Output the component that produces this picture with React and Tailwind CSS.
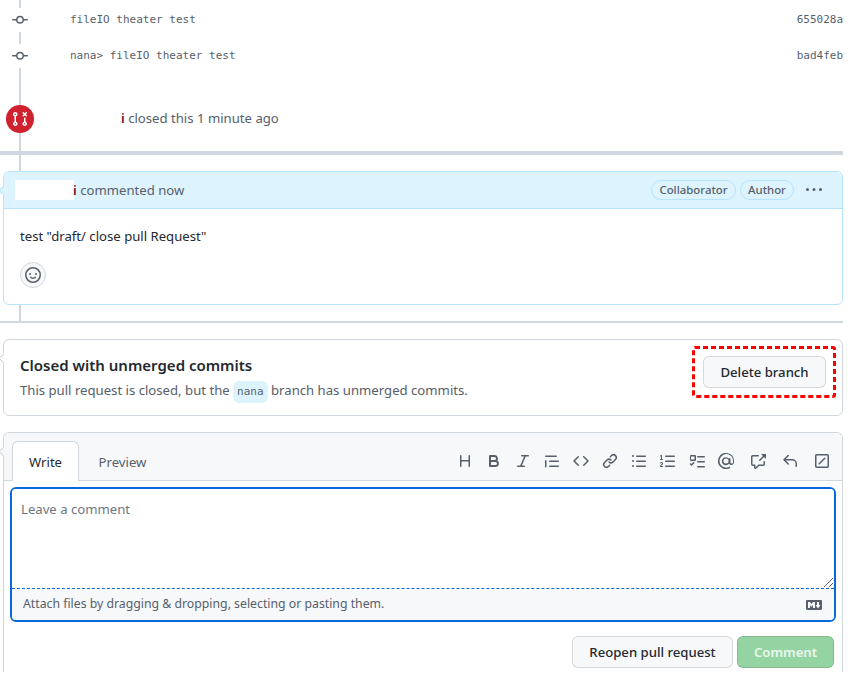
const I = {
  commit: "M11.93 8.5a4.002 4.002 0 0 1-7.86 0H.75a.75.75 0 0 1 0-1.5h3.32a4.002 4.002 0 0 1 7.86 0h3.32a.75.75 0 0 1 0 1.5Zm-1.43-.75a2.5 2.5 0 1 0-5 0 2.5 2.5 0 0 0 5 0Z",
  prClosed: "M3.25 1A2.25 2.25 0 0 1 4 5.372v5.256a2.251 2.251 0 1 1-1.5 0V5.372A2.251 2.251 0 0 1 3.25 1Zm9.5 5.5a.75.75 0 0 1 .75.75v3.378a2.251 2.251 0 1 1-1.5 0V7.25a.75.75 0 0 1 .75-.75Zm-2.03-5.273a.75.75 0 0 1 1.06 0l.97.97.97-.97a.748.748 0 0 1 1.265.332.75.75 0 0 1-.205.729l-.97.97.97.97a.751.751 0 0 1-.018 1.042.751.751 0 0 1-1.042.018l-.97-.97-.97.97a.749.749 0 0 1-1.275-.326.749.749 0 0 1 .215-.734l.97-.97-.97-.97a.75.75 0 0 1 0-1.06ZM2.5 3.25a.75.75 0 1 0 1.5 0 .75.75 0 0 0-1.5 0ZM3.25 12a.75.75 0 1 0 0 1.5.75.75 0 0 0 0-1.5Zm9.5 0a.75.75 0 1 0 0 1.5.75.75 0 0 0 0-1.5Z",
  smiley: "M8 0a8 8 0 1 1 0 16A8 8 0 0 1 8 0ZM1.5 8a6.5 6.5 0 1 0 13 0 6.5 6.5 0 0 0-13 0Zm3.82 1.636a.75.75 0 0 1 1.038.175l.007.009c.103.118.22.222.35.31.264.178.683.37 1.285.37.602 0 1.02-.192 1.285-.371.13-.088.247-.192.35-.31l.007-.008a.75.75 0 0 1 1.222.87l-.022-.015c.02.013.021.015.021.015v.001l-.001.002-.002.003-.005.007-.014.019a2.066 2.066 0 0 1-.184.213c-.16.166-.338.316-.53.445-.63.418-1.37.638-2.127.629-.946 0-1.652-.308-2.126-.63a3.331 3.331 0 0 1-.715-.657l-.014-.02-.005-.006-.002-.003v-.002h-.001l.613-.432-.614.43a.75.75 0 0 1 .183-1.044ZM12 7a1 1 0 1 1-2 0 1 1 0 0 1 2 0ZM5 8a1 1 0 1 1 0-2 1 1 0 0 1 0 2Z",
  kebab: "M8 9a1.5 1.5 0 1 0 0-3 1.5 1.5 0 0 0 0 3ZM1.5 9a1.5 1.5 0 1 0 0-3 1.5 1.5 0 0 0 0 3Zm13 0a1.5 1.5 0 1 0 0-3 1.5 1.5 0 0 0 0 3Z",
  heading: "M3.75 2a.75.75 0 0 1 .75.75V7h7V2.75a.75.75 0 0 1 1.5 0v10.5a.75.75 0 0 1-1.5 0V8.5h-7v4.75a.75.75 0 0 1-1.5 0V2.75A.75.75 0 0 1 3.75 2Z",
  bold: "M4 2h4.5a3.501 3.501 0 0 1 2.852 5.53A3.499 3.499 0 0 1 9.5 14H4a1 1 0 0 1-1-1V3a1 1 0 0 1 1-1Zm1 7v3h4.5a1.5 1.5 0 0 0 0-3Zm3.5-2a1.5 1.5 0 0 0 0-3H5v3Z",
  italic: "M6 2.75A.75.75 0 0 1 6.75 2h6.5a.75.75 0 0 1 0 1.5h-2.505l-3.858 9H9.25a.75.75 0 0 1 0 1.5h-6.5a.75.75 0 0 1 0-1.5h2.505l3.858-9H6.75A.75.75 0 0 1 6 2.75Z",
  quote: "M1.75 2.5h10.5a.75.75 0 0 1 0 1.5H1.75a.75.75 0 0 1 0-1.5Zm4 5h8.5a.75.75 0 0 1 0 1.5h-8.5a.75.75 0 0 1 0-1.5Zm0 5h8.5a.75.75 0 0 1 0 1.5h-8.5a.75.75 0 0 1 0-1.5ZM2.5 7.75v6a.75.75 0 0 1-1.5 0v-6a.75.75 0 0 1 1.5 0Z",
  code: "m11.28 3.22 4.25 4.25a.75.75 0 0 1 0 1.06l-4.25 4.25a.749.749 0 0 1-1.275-.326.749.749 0 0 1 .215-.734L13.94 8l-3.72-3.72a.749.749 0 0 1 .326-1.275.749.749 0 0 1 .734.215Zm-6.56 0a.751.751 0 0 1 1.042.018.751.751 0 0 1 .018 1.042L2.06 8l3.72 3.72a.749.749 0 0 1-.326 1.275.749.749 0 0 1-.734-.215L.47 8.53a.75.75 0 0 1 0-1.06Z",
  link: "m7.775 3.275 1.25-1.25a3.5 3.5 0 1 1 4.95 4.95l-2.5 2.5a3.5 3.5 0 0 1-4.95 0 .751.751 0 0 1 .018-1.042.751.751 0 0 1 1.042-.018 1.998 1.998 0 0 0 2.83 0l2.5-2.5a2.002 2.002 0 0 0-2.83-2.83l-1.25 1.25a.751.751 0 0 1-1.042-.018.751.751 0 0 1-.018-1.042Zm-4.69 9.64a1.998 1.998 0 0 0 2.83 0l1.25-1.25a.751.751 0 0 1 1.042.018.751.751 0 0 1 .018 1.042l-1.25 1.25a3.5 3.5 0 1 1-4.95-4.95l2.5-2.5a3.5 3.5 0 0 1 4.95 0 .751.751 0 0 1-.018 1.042.751.751 0 0 1-1.042.018 1.998 1.998 0 0 0-2.83 0l-2.5 2.5a1.998 1.998 0 0 0 0 2.83Z",
  ul: "M5.75 2.5h8.5a.75.75 0 0 1 0 1.5h-8.5a.75.75 0 0 1 0-1.5Zm0 5h8.5a.75.75 0 0 1 0 1.5h-8.5a.75.75 0 0 1 0-1.5Zm0 5h8.5a.75.75 0 0 1 0 1.5h-8.5a.75.75 0 0 1 0-1.5ZM2 14a1 1 0 1 1 0-2 1 1 0 0 1 0 2Zm1-6a1 1 0 1 1-2 0 1 1 0 0 1 2 0ZM2 4a1 1 0 1 1 0-2 1 1 0 0 1 0 2Z",
  ol: "M5 3.25a.75.75 0 0 1 .75-.75h8.5a.75.75 0 0 1 0 1.5h-8.5A.75.75 0 0 1 5 3.25Zm0 5a.75.75 0 0 1 .75-.75h8.5a.75.75 0 0 1 0 1.5h-8.5A.75.75 0 0 1 5 8.25Zm0 5a.75.75 0 0 1 .75-.75h8.5a.75.75 0 0 1 0 1.5h-8.5a.75.75 0 0 1-.75-.75ZM.924 10.32a.5.5 0 0 1-.851-.525l.001-.001.001-.002.002-.004.007-.011c.097-.144.215-.273.348-.384.228-.19.588-.392 1.068-.392.468 0 .858.181 1.126.484.259.294.377.673.377 1.038 0 .987-.686 1.495-1.156 1.845l-.047.035c-.303.225-.522.4-.654.597h1.357a.5.5 0 0 1 0 1H.5a.5.5 0 0 1-.5-.5c0-1.005.692-1.52 1.167-1.875l.035-.025c.531-.396.8-.625.8-1.078a.57.57 0 0 0-.128-.376C1.806 10.068 1.695 10 1.5 10a.658.658 0 0 0-.429.163.835.835 0 0 0-.144.153ZM2.003 2.5V6h.503a.5.5 0 0 1 0 1H.5a.5.5 0 0 1 0-1h.503V3.308l-.28.14a.5.5 0 0 1-.446-.895l1.003-.5a.5.5 0 0 1 .723.447Z",
  task: "M2 2h4a1 1 0 0 1 1 1v4a1 1 0 0 1-1 1H2a1 1 0 0 1-1-1V3a1 1 0 0 1 1-1Zm0 1.5v3h3.5v-3ZM8.75 3h6.5a.75.75 0 0 1 0 1.5h-6.5a.75.75 0 0 1 0-1.5Zm0 5h6.5a.75.75 0 0 1 0 1.5h-6.5a.75.75 0 0 1 0-1.5Zm0 5h6.5a.75.75 0 0 1 0 1.5h-6.5a.75.75 0 0 1 0-1.5ZM5.28 10.28l-2.25 2.25a.75.75 0 0 1-1.06 0l-1-1a.75.75 0 1 1 1.06-1.06l.47.47 1.72-1.72a.75.75 0 1 1 1.06 1.06Z",
  mention: "M4.75 2.37a6.501 6.501 0 0 0 6.5 11.26.75.75 0 0 1 .75 1.298A7.999 7.999 0 0 1 .989 4.148 8 8 0 0 1 16 7.75v1.5a2.75 2.75 0 0 1-5.072 1.475 3.999 3.999 0 1 1 .047-4.9A.75.75 0 0 1 12.5 5.75v3.5a1.25 1.25 0 0 0 2.5 0v-1.5a6.5 6.5 0 0 0-10.25-5.38ZM10.5 8a2.5 2.5 0 1 0-5 0 2.5 2.5 0 0 0 5 0Z",
  xref: "M2.75 3.5a.25.25 0 0 0-.25.25v7.5c0 .138.112.25.25.25h2a.75.75 0 0 1 .75.75v2.19l2.72-2.72a.749.749 0 0 1 .53-.22h4.5a.25.25 0 0 0 .25-.25v-2.5a.75.75 0 0 1 1.5 0v2.5A1.75 1.75 0 0 1 13.25 13H9.06l-2.573 2.573A1.458 1.458 0 0 1 4 14.543V13H2.75A1.75 1.75 0 0 1 1 11.25v-7.5C1 2.784 1.784 2 2.75 2h5.5a.75.75 0 0 1 0 1.5ZM16 1.25v4.146a.25.25 0 0 1-.427.177L14.03 4.03l-3.75 3.75a.749.749 0 0 1-1.275-.326.749.749 0 0 1 .215-.734l3.75-3.75-1.543-1.543A.25.25 0 0 1 11.604 1h4.146a.25.25 0 0 1 .25.25Z",
  reply: "M6.78 1.97a.75.75 0 0 1 0 1.06L3.81 6h6.44A4.75 4.75 0 0 1 15 10.75v2.5a.75.75 0 0 1-1.5 0v-2.5a3.25 3.25 0 0 0-3.25-3.25H3.81l2.97 2.97a.749.749 0 0 1-.326 1.275.749.749 0 0 1-.734-.215L1.47 7.28a.75.75 0 0 1 0-1.06l4.25-4.25a.75.75 0 0 1 1.06 0Z",
  slash: "M13.25 1c.966 0 1.75.784 1.75 1.75v10.5A1.75 1.75 0 0 1 13.25 15H2.75A1.75 1.75 0 0 1 1 13.25V2.75C1 1.784 1.784 1 2.75 1ZM2.75 2.5a.25.25 0 0 0-.25.25v10.5c0 .138.112.25.25.25h10.5a.25.25 0 0 0 .25-.25V2.75a.25.25 0 0 0-.25-.25Zm8.53 3.28-5.5 5.5a.749.749 0 0 1-1.275-.326.749.749 0 0 1 .215-.734l5.5-5.5a.749.749 0 0 1 1.06 1.06Z",
  md: "M14.85 3c.63 0 1.15.52 1.14 1.15v7.7c0 .63-.51 1.15-1.15 1.15H1.15C.52 13 0 12.48 0 11.84V4.15C0 3.52.52 3 1.15 3ZM9 11V5H7L5.5 7 4 5H2v6h2V8l1.5 1.92L7 8v3Zm2.99.5L14.5 8H13V5h-2v3H9.5Z",
};

function Icon({ d, className = "" }) {
  return (
    <svg viewBox="0 0 16 16" width="16" height="16" fill="currentColor" className={"shrink-0 " + className}>
      <path d={d} />
    </svg>
  );
}

function Commit({ msg, sha }) {
  return (
    <div className="flex h-[36px] items-center">
      <span className="-ml-[9px] bg-white py-[4px] text-[#57606a]">
        <Icon d={I.commit} />
      </span>
      <span className="ml-[42px] font-['DejaVu_Sans_Mono',monospace] text-[11px] text-[#57606a]">{msg}</span>
      <span className="ml-auto font-['DejaVu_Sans_Mono',monospace] text-[11px] text-[#57606a]">{sha}</span>
    </div>
  );
}

function Caret({ border, fill, top }) {
  return <span className={`absolute -left-[4px] size-[7px] rotate-45 border-b border-l ${border} ${fill} ${top}`} />;
}

function Pill({ width, children }) {
  return (
    <span className={`flex h-[20px] items-center justify-center rounded-full border border-[#b6e3ff] text-[11.4px] font-medium text-[#57606a] ${width}`}>
      {children}
    </span>
  );
}

export default function App() {
  return (
    <div className="h-[673px] w-[866px] overflow-hidden bg-white font-['Noto_Sans',sans-serif] text-[13.15px] text-[#24292f]">
      <div className="w-[843px]">
        <div className="ml-[19px] border-l-2 border-[#d0d7de] pt-[2px]">
          <Commit msg="fileIO theater test" sha="655028a" />
          <Commit msg="nana> fileIO theater test" sha="bad4feb" />
          <div className="flex items-center pt-[31px] pb-[18px]">
            <span className="-ml-[15px] flex size-[28px] items-center justify-center rounded-full bg-[#cf222e] text-white">
              <Icon d={I.prClosed} />
            </span>
            <span className="mb-[2px] ml-[87px] leading-[20px] text-[#57606a]">
              <b className="font-semibold text-[#82071e]">i</b> closed this 1 minute ago
            </span>
          </div>
        </div>
        <div className="h-[4px] bg-[#d0d7de]" />

        <div className="ml-[19px] h-[16px] border-l-2 border-[#d0d7de]" />
        <div className="relative ml-[3px] h-[134px] rounded-md border border-[#b6e3ff] bg-white">
          <Caret border="border-[#b6e3ff]" fill="bg-[#ddf4ff]" top="top-[15px]" />
          <div className="relative flex h-[37px] items-center rounded-t-md border-b border-[#b6e3ff] bg-[#ddf4ff] pr-[20px] pl-[11px]">
            <span className="h-[20px] w-[59px] bg-white" />
            <span className="ml-[-1px] pt-[2px] text-[#57606a]">
              <b className="font-semibold text-[#82071e]">i</b> commented now
            </span>
            <div className="ml-auto flex items-center gap-[4px]">
              <Pill width="w-[85px]">Collaborator</Pill>
              <Pill width="w-[54px]">Author</Pill>
              <span className="ml-[8px] text-[#57606a]">
                <Icon d={I.kebab} />
              </span>
            </div>
          </div>
          <p className="pt-[17px] pl-[16px] leading-[20px]">test "draft/ close pull Request"</p>
          <span className="mt-[16px] ml-[16px] flex size-[26px] items-center justify-center rounded-full border border-[#d0d7de] bg-[#f6f8fa] text-[#57606a]">
            <Icon d={I.smiley} />
          </span>
        </div>
        <div className="ml-[19px] h-[16px] border-l-2 border-[#d0d7de]" />
        <div className="h-[2px] bg-[#d0d7de]" />

        <div className="relative mt-[16px] ml-[3px] flex h-[77px] items-center rounded-md border border-[#d0d7de] bg-white pr-[16px] pl-[16px]">
          <Caret border="border-[#d0d7de]" fill="bg-white" top="top-[15px]" />
          <div className="pt-[2px]">
            <h3 className="text-[15px] leading-[22px] font-semibold">Closed with unmerged commits</h3>
            <p className="mt-[4px] leading-[20px] text-[#57606a]">
              This pull request is closed, but the{" "}
              <code className="inline-block rounded-md bg-[#ddf4ff] px-[4px] py-[1px] font-['DejaVu_Sans_Mono',monospace] text-[11px] text-[#57606a]">nana</code>{" "}
              branch has unmerged commits.
            </p>
          </div>
          <button className="relative mb-[11px] ml-auto flex h-[32px] w-[123px] items-center justify-center rounded-md border border-[#1f232826] bg-[#f6f8fa] pt-[1px] font-medium">
            Delete branch
            <svg width="144" height="52" className="absolute -top-[11px] -left-[12px]" fill="none">
              <rect x="1.5" y="1.5" width="141" height="49" rx="1.5" stroke="#ff0000" strokeWidth="3" strokeDasharray="5 3" />
            </svg>
          </button>
        </div>

        <div className="relative mt-[16px] ml-[3px] h-[240px] rounded-t-md border border-b-0 border-[#d0d7de] bg-white">
          <Caret border="border-[#d0d7de]" fill="bg-[#f6f8fa]" top="top-[15px]" />
          <div className="relative flex h-[48px] items-end justify-between rounded-t-md border-b border-[#d0d7de] bg-[#f6f8fa] pr-[12px] pl-[8px]">
            <div className="-mb-[1px] flex">
              <span className="flex h-[40px] w-[67px] items-center justify-center rounded-t-md border border-b-0 border-[#d0d7de] bg-white pt-[2px]">Write</span>
              <span className="flex h-[40px] w-[87px] items-center justify-center pt-[4px] text-[#57606a]">Preview</span>
            </div>
            <div className="flex items-center gap-[16px] self-center pt-[8px] text-[#57606a]">
              <div className="flex items-center gap-[13px]">
                {[I.heading, I.bold, I.italic, I.quote, I.code, I.link, I.ul, I.ol, I.task, I.mention].map((d, i) => (
                  <Icon key={i} d={d} />
                ))}
              </div>
              <Icon d={I.xref} />
              <Icon d={I.reply} />
              <Icon d={I.slash} />
            </div>
          </div>
          <div className="mx-[6px] mt-[6px] h-[135px] overflow-hidden rounded-md border-2 border-[#0969da]">
            <div className="relative h-[100px] border-b border-dashed border-b-[#0969da] bg-white px-[9px] py-[10px] leading-[20px] text-[#6e7781]">
              Leave a comment
              <svg viewBox="0 0 10 10" width="10" height="10" className="absolute right-[1px] bottom-[1px] text-[#57606a]" stroke="currentColor" fill="none">
                <path d="M1 10 10 1M6 10l4-4" />
              </svg>
            </div>
            <div className="flex h-[31px] items-center justify-between bg-[#f6f8fa] pr-[12px] pl-[11px] text-[12.27px] text-[#57606a]">
              <span>Attach files by dragging &amp; dropping, selecting or pasting them.</span>
              <Icon d={I.md} />
            </div>
          </div>
          <div className="mt-[14px] flex justify-end gap-[4px] pr-[8px]">
            <button className="flex h-[32px] w-[161px] items-center justify-center rounded-md border border-[#1f232826] bg-[#f6f8fa] pt-[1px] font-medium">Reopen pull request</button>
            <button className="flex h-[32px] w-[97px] items-center justify-center rounded-md border border-[#1f232826] bg-[#94d3a2] pt-[1px] font-semibold text-white/80">Comment</button>
          </div>
        </div>
      </div>
    </div>
  );
}
